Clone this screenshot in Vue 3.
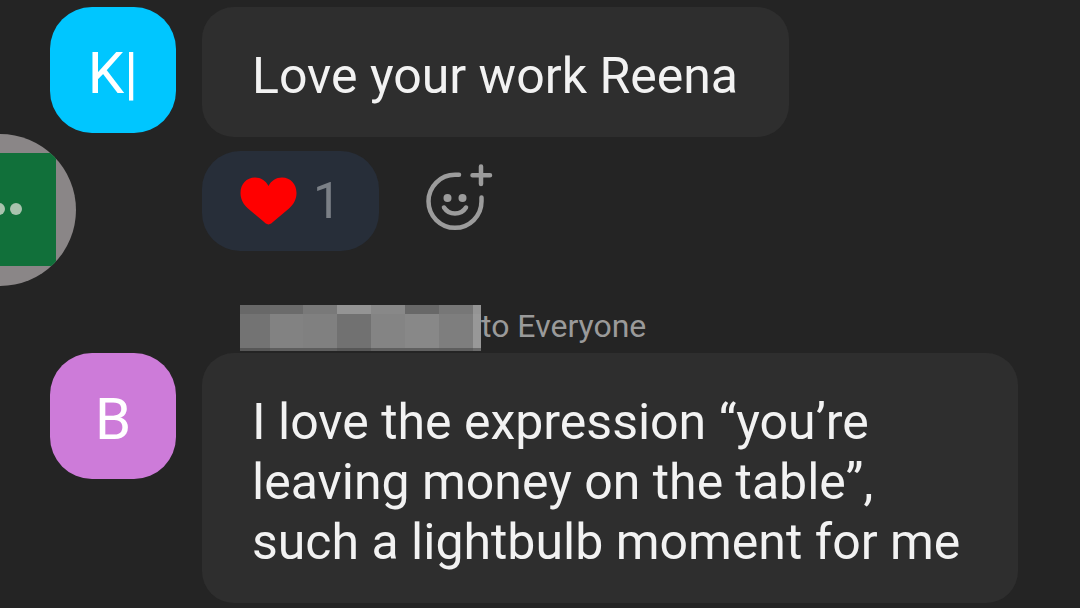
<script setup>
import { ref } from 'vue'

const reactionCount = ref(1)

const columns = [
  { x: 0, w: 30, top: '#686868', mid: '#737373', end: '#575757' },
  { x: 30, w: 33, top: '#6b6b6b', mid: '#828282', end: '#5e5e5e' },
  { x: 63, w: 34, top: '#797979', mid: '#808080', end: '#5e5e5e' },
  { x: 97, w: 34, top: '#949494', mid: '#717171', end: '#575757' },
  { x: 131, w: 34, top: '#888888', mid: '#848484', end: '#606060' },
  { x: 165, w: 34, top: '#686868', mid: '#888888', end: '#606060' },
  { x: 199, w: 34, top: '#777777', mid: '#7e7e7e', end: '#5e5e5e' },
  { x: 233, w: 8, top: '#949494', mid: '#989898', end: '#6a6a6a' }
]
</script>

<template>
  <main class="chat">
    <article class="message">
      <div class="avatar avatar-blue">K|</div>
      <div class="body">
        <p class="bubble">Love your work Reena</p>
        <div class="reactions">
          <button class="reaction" type="button" aria-label="Heart reactions">
            <svg class="heart" viewBox="0 0 57 48" aria-hidden="true">
              <path d="M28.500 47.500C26.500 47.500 24.500 45.500 22 43.300L8 31.500C3 27 0.500 22 0.500 16C0.500 7 6.500 0.500 15 0.500C21 0.500 25.500 3.500 28.500 9C31.500 3.500 36 0.500 42 0.500C50.500 0.500 56.500 7 56.500 16C56.500 22 54 27 49 31.500L35 43.300C32.500 45.500 30.500 47.500 28.500 47.500Z" fill="#ff0000" />
            </svg>
            <span>{{ reactionCount }}</span>
          </button>
          <button class="add" type="button" aria-label="Add reaction">
            <svg viewBox="0 0 80 80" aria-hidden="true" fill="none" stroke="#9c9c9c" stroke-width="4.500" stroke-linecap="round">
              <path d="M39 13.800H35A26.500 26.500 0 1 0 61.500 40.300V36.500" />
              <path d="M61 5.500V23M52.500 14.300H70" />
              <path d="M24 46.500C29 54.500 41 54.500 46 46.500" />
              <g fill="#9c9c9c" stroke="none">
                <circle cx="27.500" cy="37" r="4" />
                <circle cx="42.500" cy="37" r="4" />
              </g>
            </svg>
          </button>
        </div>
      </div>
    </article>

    <article class="message">
      <header class="meta">
        <svg class="mosaic" viewBox="0 0 241 46" aria-hidden="true" shape-rendering="crispEdges">
          <g v-for="c in columns" :key="c.x">
            <rect :x="c.x" y="0" :width="c.w" height="9" :fill="c.top" />
            <rect :x="c.x" y="9" :width="c.w" height="34" :fill="c.mid" />
            <rect :x="c.x" y="43" :width="c.w" height="3" :fill="c.end" />
          </g>
        </svg>
        <span>to Everyone</span>
      </header>
      <div class="avatar avatar-pink">B</div>
      <div class="body">
        <p class="bubble">I love the expression “you’re leaving money on the table”, such a lightbulb moment for me</p>
      </div>
    </article>

    <button class="floating" type="button" aria-label="More">
      <svg viewBox="0 0 152 152" aria-hidden="true">
        <rect width="152" height="152" fill="#8a8687" />
        <rect x="18" y="19" width="114" height="113" fill="#11703a" />
        <g fill="#a9c3ae">
          <circle cx="58" cy="75" r="6" />
          <circle cx="75" cy="75" r="6" />
          <circle cx="92" cy="75" r="6" />
        </g>
      </svg>
    </button>
  </main>
</template>

<style>
body {
  margin: 0;
  background: #242424;
}
</style>

<style scoped>
.chat {
  position: relative;
  box-sizing: border-box;
  min-height: 100vh;
  padding: 7px 62px 5px 50px;
  overflow: hidden;
  background: #242424;
  color: #f2f2f2;
  font-family: Roboto, "Liberation Sans", sans-serif;
}

.message {
  display: grid;
  grid-template-columns: 126px minmax(0, 1fr);
  column-gap: 26px;
}

.message + .message {
  margin-top: 54px;
}

.avatar {
  display: flex;
  align-items: center;
  justify-content: center;
  box-sizing: border-box;
  height: 126px;
  padding-top: 6px;
  border-radius: 42px;
  color: #ffffff;
  font-size: 58px;
}

.avatar-blue {
  background: #00c6ff;
}

.avatar-pink {
  background: #cd7bd9;
}

.body {
  display: flex;
  flex-direction: column;
  align-items: flex-start;
}

.bubble {
  margin: 0;
  padding: 39px 51px 31px 50px;
  border-radius: 32px;
  background: #2e2e2e;
  font-size: 50px;
  line-height: 60px;
}

.reactions {
  display: flex;
  align-items: center;
  gap: 41px;
  margin-top: 14px;
}

.reaction,
.add,
.floating {
  margin: 0;
  padding: 0;
  border: 0;
  background: none;
  font: inherit;
}

.reaction {
  display: flex;
  align-items: center;
  gap: 16px;
  height: 100px;
  padding: 0 38px;
  border-radius: 38px;
  background: #272e39;
  color: #7b8087;
  font-size: 50px;
}

.heart {
  width: 57px;
  height: 48px;
}

.add svg {
  display: block;
  width: 80px;
  height: 80px;
}

.meta {
  grid-column: 2;
  display: flex;
  align-items: flex-start;
  margin: 0 0 2px 38px;
  color: #9a9a9a;
  font-size: 32px;
  line-height: 42px;
}

.mosaic {
  width: 241px;
  height: 46px;
}

.floating {
  position: absolute;
  top: 134px;
  left: -76px;
  width: 152px;
  height: 152px;
  border-radius: 50%;
  overflow: hidden;
}

.floating svg {
  display: block;
}
</style>
